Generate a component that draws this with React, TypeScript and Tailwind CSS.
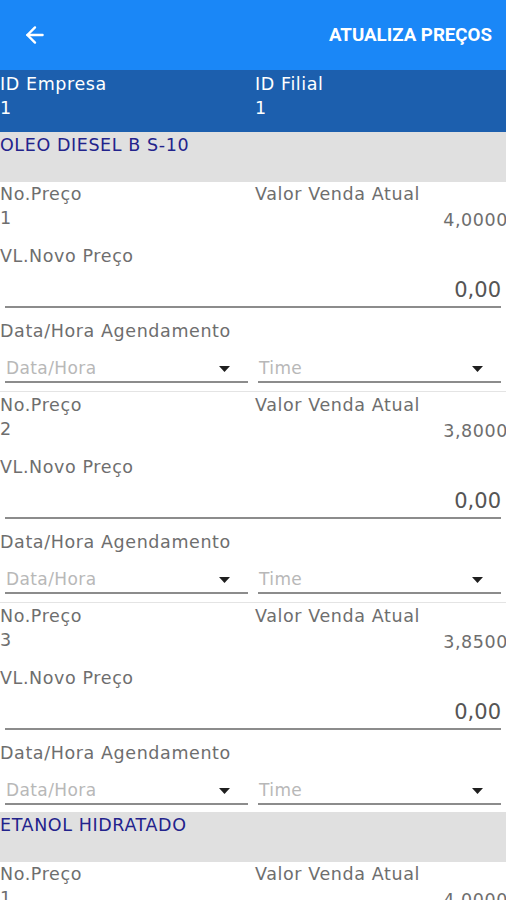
import { ArrowLeft } from "lucide-react";

type Preco = { no: string; atual: string };
type Produto = { nome: string; precos: Preco[] };

const produtos: Produto[] = [
  {
    nome: "OLEO DIESEL B S-10",
    precos: [
      { no: "1", atual: "4,0000" },
      { no: "2", atual: "3,8000" },
      { no: "3", atual: "3,8500" },
    ],
  },
  {
    nome: "ETANOL HIDRATADO",
    precos: [{ no: "1", atual: "4,0000" }],
  },
];

const font = { fontFamily: "'DejaVu Sans', 'Open Sans', sans-serif" };

const Caret = () => (
  <svg width="11" height="6" viewBox="0 0 11 6" className="shrink-0">
    <path d="M0 0h11L5.5 6z" fill="#1f1f1f" />
  </svg>
);

const Dropdown = ({ placeholder }: { placeholder: string }) => (
  <div className="flex h-8 flex-1 items-center justify-between border-b-2 border-[#8c8c8c] pl-[1px] pr-[18px] pt-[5px]">
    <span className="text-[17px] tracking-[0.4px] text-[#b8b8b8]">{placeholder}</span>
    <Caret />
  </div>
);

const PrecoItem = ({ preco }: { preco: Preco }) => (
  <div className="pb-[7px]">
    <div className="grid grid-cols-2 leading-6">
      <span>No.Preço</span>
      <span className="pl-[2px]">Valor Venda Atual</span>
    </div>
    <div className="flex justify-between leading-6">
      <span>{preco.no}</span>
      <span className="mt-[2px] -mr-[2px]">{preco.atual}</span>
    </div>
    <div className="mt-[12px] leading-6">VL.Novo Preço</div>
    <div className="mx-[5px] mt-[2px] flex h-[38px] items-center justify-end border-b-2 border-[#8c8c8c] pt-[6px]">
      <span className="text-[21px] tracking-normal text-[#555]">0,00</span>
    </div>
    <div className="mt-[11px] leading-6">Data/Hora Agendamento</div>
    <div className="mx-[5px] mt-2 flex gap-[10px]">
      <Dropdown placeholder="Data/Hora" />
      <Dropdown placeholder="Time" />
    </div>
  </div>
);

export default function App() {
  return (
    <div className="h-[900px] w-[506px] overflow-hidden bg-white text-[17.5px] tracking-[0.6px] text-[#6e6e6e]" style={font}>
      <header className="flex h-[70px] items-center justify-between bg-[#1a87f7] pl-[22px] pr-[14px]">
        <ArrowLeft className="text-white" size={26} strokeWidth={2.2} />
        <span className="text-[18.7px] font-bold tracking-normal text-white" style={{ fontFamily: "Roboto, sans-serif" }}>
          ATUALIZA PREÇOS
        </span>
      </header>

      <div className="grid h-[62px] grid-cols-2 bg-[#1c5fae] pt-[2px] leading-6 text-white">
        <div>
          <div>ID Empresa</div>
          <div>1</div>
        </div>
        <div className="pl-[2px]">
          <div>ID Filial</div>
          <div>1</div>
        </div>
      </div>

      {produtos.map((p) => (
        <section key={p.nome}>
          <div className="h-[50px] bg-[#e0e0e0] pt-[1px] leading-6 text-[#23238c]">{p.nome}</div>
          {p.precos.map((preco, i) => (
            <div key={i}>
              <PrecoItem preco={preco} />
              {i < p.precos.length - 1 && <div className="mb-[1px] mt-[1px] h-px bg-[#e4e4e4]" />}
            </div>
          ))}
        </section>
      ))}
    </div>
  );
}
